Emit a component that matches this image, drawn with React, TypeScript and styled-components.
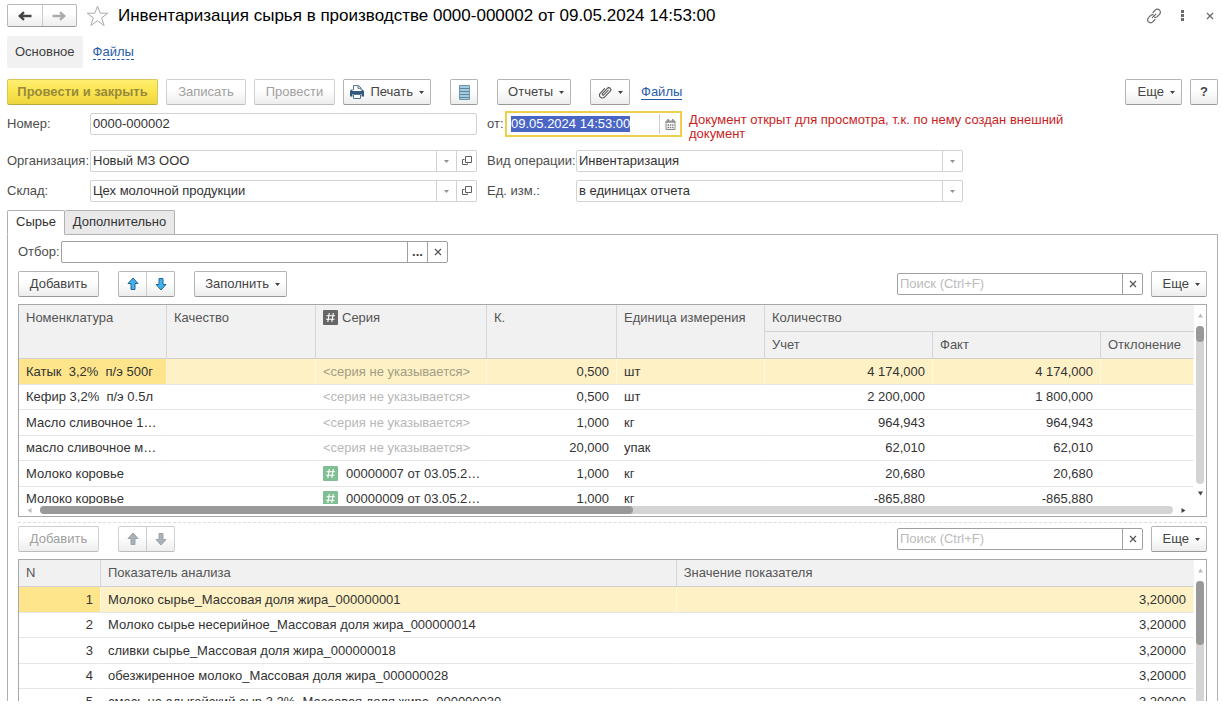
import React, { useEffect, useRef } from "react";
import styled, { createGlobalStyle, css } from "styled-components";

const GlobalStyle = createGlobalStyle`
  *, *::before, *::after { box-sizing: border-box; }
  body {
    margin: 0;
    background: #fff;
    color: #404040;
    font: 13px/16px "Liberation Sans", Arial, sans-serif;
  }
  button, input, select { font: inherit; color: inherit; margin: 0; }
  h1 { margin: 0; font-weight: 400; }
  svg { flex: none; }
`;

const Page = styled.main`
  display: flex;
  flex-direction: column;
  height: 100vh;
  padding: 4px 4px 9px 7px;
  overflow: hidden;
`;

/* ---------- window header ---------- */

const TitleBar = styled.header`
  display: flex;
  align-items: center;
  height: 23px;
`;

const Title = styled.h1`
  flex: 1;
  color: #000;
  font-size: 17px;
  line-height: 20px;
  margin-left: 9px;
`;

const IconButton = styled.button<{ $w: number }>`
  display: flex;
  align-items: center;
  justify-content: center;
  width: ${(p) => p.$w}px;
  height: 22px;
  padding: 0;
  border: 0;
  background: none;
  color: #666;
`;

const Sections = styled.nav`
  display: flex;
  align-items: center;
  gap: 7px;
  height: 32px;
  margin-top: 9px;
`;

const Section = styled.a`
  padding: 8px;
  border-radius: 2px;
  background: #f1f1f1;
  color: #404040;
  text-decoration: none;
`;

const Link = styled.a<{ $dashed?: boolean }>`
  margin-left: 3px;
  color: #2a5caa;
  text-decoration: none;
  line-height: 14px;
  border-bottom: 1px ${(p) => (p.$dashed ? "dashed" : "solid")} #2a5caa;
`;

/* ---------- buttons ---------- */

const Bar = styled.div<{ $top?: number }>`
  display: flex;
  align-items: center;
  gap: 8px;
  height: 26px;
  flex: none;
  margin-top: ${(p) => p.$top ?? 0}px;
`;

const Spacer = styled.span<{ $w?: number }>`
  flex: ${(p) => (p.$w ? `0 0 ${p.$w}px` : "1")};
`;

const Button = styled.button<{ $w: number; $primary?: boolean; $end?: boolean; $bold?: boolean }>`
  display: flex;
  align-items: center;
  justify-content: ${(p) => (p.$end ? "flex-end" : "center")};
  gap: 6px;
  flex: none;
  width: ${(p) => p.$w}px;
  height: 26px;
  padding: 0 ${(p) => (p.$end ? 6 : 0)}px;
  border: 1px solid #b4b4b4;
  border-bottom-color: #999;
  border-radius: 2px;
  background: linear-gradient(#fff, #fff 40%, #ededed);
  color: #444;
  font-weight: ${(p) => (p.$bold ? 700 : 400)};
  white-space: nowrap;
  &:disabled {
    color: #a0a0a0;
    border-color: #d0d0d0;
    border-bottom-color: #bcbcbc;
  }
  ${(p) =>
    p.$primary &&
    css`
      &, &:disabled {
        background: linear-gradient(#ffee70, #fae44f 50%, #eed53f);
        border-color: #d9c65a;
        border-bottom-color: #bba93c;
        color: #978a3c;
        font-weight: 700;
      }
    `}
`;

const Pair = styled.div<{ $w: number; $h: number; $off?: boolean }>`
  display: flex;
  flex: none;
  width: ${(p) => p.$w}px;
  height: ${(p) => p.$h}px;
  border: 1px solid ${(p) => (p.$off ? "#d0d0d0" : "#b8b8b8")};
  border-bottom-color: ${(p) => (p.$off ? "#bcbcbc" : "#999")};
  border-radius: 2px;
  background: linear-gradient(#fff, #fff 40%, #ededed);
  button {
    display: flex;
    flex: 1;
    align-items: center;
    justify-content: center;
    padding: 0;
    border: 0;
    background: none;
  }
  button + button { border-left: 1px solid #ccc; }
`;

/* ---------- form ---------- */

const Form = styled.div`
  display: grid;
  grid-template-columns: 83px minmax(0, 387px) 99px minmax(0, 387px);
  row-gap: 8px;
  align-items: center;
  margin-top: 6px;
`;

const HeadRow = styled.div`
  display: flex;
  align-items: center;
  height: 26px;
  margin-top: 6px;
  margin-bottom: 7px;
`;

const Label = styled.label<{ $w?: number; $indent?: number }>`
  flex: none;
  width: ${(p) => (p.$w ? `${p.$w}px` : "auto")};
  padding-left: ${(p) => p.$indent ?? 0}px;
  color: #4d4d4d;
  white-space: nowrap;
`;

const Field = styled.div<{ $dark?: boolean; $w?: number }>`
  display: flex;
  flex: ${(p) => (p.$w ? `0 1 ${p.$w}px` : "1")};
  height: 22px;
  min-width: 0;
  border: 1px solid ${(p) => (p.$dark ? "#a0a0a0" : "#d2d2d2")};
  border-radius: 2px;
  background: #fff;
  input, select {
    flex: 1;
    width: 0;
    min-width: 0;
    padding: 0 2px;
    border: 0;
    outline: 0;
    background: none;
    color: #333;
    appearance: none;
  }
  input::placeholder { color: #bbb; opacity: 1; }
  input::selection { background: #4a66c4; color: #fff; }
  button, > span {
    display: flex;
    flex: none;
    align-items: center;
    justify-content: center;
    width: 20px;
    padding: 0;
    border: 0;
    border-left: 1px solid ${(p) => (p.$dark ? "#a0a0a0" : "#d2d2d2")};
    background: none;
  }
`;

const DateField = styled(Field)`
  height: 26px;
  border: 2px solid #ecd04c;
  border-radius: 0;
  input { padding: 0 4px; }
  button { width: 21px; margin: 1px 0; }
`;

const Warning = styled.p`
  flex: 1;
  max-width: 400px;
  margin: 6px 0 0 7px;
  color: #c81e1e;
  line-height: 14px;
`;

/* ---------- tabs and panel ---------- */

const Tabs = styled.div`
  display: flex;
  flex: none;
  height: 25px;
  margin-top: 8px;
`;

const Tab = styled.button<{ $active?: boolean; $w: number }>`
  width: ${(p) => p.$w}px;
  height: 25px;
  padding: 0 0 2px;
  border: 1px solid #b0b0b0;
  border-radius: 2px 2px 0 0;
  border-bottom-color: ${(p) => (p.$active ? "#fff" : "#b0b0b0")};
  border-left-width: ${(p) => (p.$active ? 1 : 0)}px;
  background: ${(p) => (p.$active ? "#fff" : "#e9e9e9")};
  color: #333;
  z-index: 1;
`;

const Panel = styled.section`
  display: flex;
  flex: 1;
  flex-direction: column;
  min-height: 0;
  margin-top: -1px;
  padding: 4px 10px 0;
  border: 1px solid #b0b0b0;
  border-bottom: 0;
  overflow: hidden;
`;

const FilterBar = styled(Bar)`
  gap: 0;
`;

const Splitter = styled.hr`
  flex: none;
  width: 100%;
  margin: 5px 0 3px;
  border: 0;
  border-top: 1px dashed #ddd;
`;

/* ---------- data grids ---------- */

const GridBox = styled.div<{ $h?: number }>`
  display: flex;
  flex: ${(p) => (p.$h ? `0 0 ${p.$h}px` : "1")};
  min-height: 0;
  margin-top: 7px;
  border: 1px solid #a8a8a8;
  border-bottom-width: ${(p) => (p.$h ? 1 : 0)}px;
  overflow: hidden;
`;

const GridMain = styled.div`
  display: flex;
  flex: 1;
  flex-direction: column;
  min-width: 0;
  min-height: 0;
`;

const GridClip = styled.div`
  flex: 1;
  min-height: 0;
  overflow: hidden;
`;

const Table = styled.table`
  width: 100%;
  table-layout: fixed;
  border-collapse: separate;
  border-spacing: 0;
  th, td {
    padding: 0 2px 0 7px;
    overflow: hidden;
    text-align: left;
    text-overflow: ellipsis;
    white-space: pre;
    font-weight: 400;
  }
  th {
    height: 27px;
    background: #f1f1f1;
    border-right: 1px solid #d6d6d6;
    border-bottom: 1px solid #d0d0d0;
    color: #555;
  }
  th[rowspan] { padding-top: 5px; vertical-align: top; }
  th:last-child { border-right-color: #f1f1f1; }
  td {
    height: 26px;
    border-right: 1px solid transparent;
    border-bottom: 1px solid #e6e6e6;
    color: #333;
  }
  tr:nth-child(even) > td { height: 25px; }
`;

const Row = styled.tr<{ $selected?: boolean }>`
  ${(p) =>
    p.$selected &&
    css`
      td { background: #fdf1c5; border-right-color: #fff8e0; }
      td:first-child { background: #fee58c; }
    `}
`;

const Cell = styled.td<{ $right?: boolean }>`
  ${(p) =>
    p.$right &&
    css`
      && { padding-right: 7px; text-align: right; }
    `}
`;

const Muted = styled.span<{ $strong?: boolean }>`
  color: ${(p) => (p.$strong ? "#a39d85" : "#b8b8b8")};
`;

const Hash = styled.svg<{ $gap: number }>`
  width: 15px;
  height: 15px;
  margin-right: ${(p) => p.$gap}px;
  vertical-align: -3px;
`;

const VScroll = styled.div`
  display: flex;
  flex: 0 0 12px;
  flex-direction: column;
  align-items: center;
  padding-top: 8px;
`;

const VTrack = styled.div<{ $fill?: boolean }>`
  width: 8px;
  flex: ${(p) => (p.$fill ? "1" : "0 0 158px")};
  margin: 8px 0 7px;
  border-radius: 4px;
  background: #d4d4d4;
  ${(p) => p.$fill && "margin-bottom: 0; border-radius: 4px 4px 0 0;"}
`;

const Thumb = styled.div<{ $h: number }>`
  width: 8px;
  height: ${(p) => p.$h}px;
  border-radius: 4px;
  background: #999;
`;

const HScroll = styled.div`
  display: flex;
  flex: 0 0 12px;
  align-items: center;
  padding: 0 8px;
  background: #fff;
`;

const HTrack = styled.div`
  flex: 1;
  height: 8px;
  margin: 0 8px;
  border-radius: 4px;
  background: #d4d4d4;
`;

const HThumb = styled.div`
  width: calc(100% * 11 / 21);
  height: 8px;
  border-radius: 4px;
  background: #999;
`;

/* ---------- icons ---------- */

const Caret = ({ pale }: { pale?: boolean }) => (
  <svg width="5" height="3" viewBox="0 0 5 3" fill={pale ? "#909090" : "#444"}>
    <path d="M0 0h5L2.5 3z" />
  </svg>
);

const NavArrow = ({ flip, color }: { flip?: boolean; color: string }) => (
  <svg width="14" height="10" viewBox="0 0 14 10" fill="none" stroke={color} strokeWidth="2.4">
    {flip ? <path d="M0.5 5h11M8 1.2l4.3 3.8L8 8.8" /> : <path d="M13.5 5h-11M6 1.2L1.7 5 6 8.8" />}
  </svg>
);

const Star = () => (
  <svg width="23" height="22" viewBox="0 0 23 22" fill="#fff" stroke="#aaa" strokeWidth="1">
    <path d="M11.5 1.2l2.7 7h7.6l-6.1 4.7 2.4 7.6-6.6-4.7-6.6 4.7 2.4-7.6L1.2 8.2h7.6z" />
  </svg>
);

const LinkIcon = () => (
  <svg width="16" height="16" viewBox="0 0 16 16" fill="none" stroke="#6a6a6a" strokeWidth="1.2" strokeLinecap="round">
    <path d="M7 4.5l2.2-2.4a2.9 2.9 0 0 1 4.3 0 2.9 2.9 0 0 1 0 4.2L11.3 8.6a2.9 2.9 0 0 1-2.6.6" />
    <path d="M9 11.5l-2.2 2.4a2.9 2.9 0 0 1-4.3 0 2.9 2.9 0 0 1 0-4.2L4.7 7.4a2.9 2.9 0 0 1 2.6-.6" />
    <path d="M6.3 9.7l3.4-3.4" />
  </svg>
);

const Dots = () => (
  <svg width="3" height="11" viewBox="0 0 3 11" fill="#6a6a6a">
    <path d="M0 0h3v3H0zM0 4h3v3H0zM0 8h3v3H0z" />
  </svg>
);

const Cross = ({ color = "#555" }: { color?: string }) => (
  <svg width="8" height="8" viewBox="0 0 8 8" stroke={color} strokeWidth="1.2">
    <path d="M1 1l6 6M7 1L1 7" />
  </svg>
);

const Printer = () => (
  <svg width="14" height="14" viewBox="0 0 14 14">
    <path d="M3.5 5V.6h5L11 3v2" fill="#fff" stroke="#54738f" />
    <path d="M8 .6V3.3h3" fill="none" stroke="#54738f" />
    <path d="M1.5 4.5h1V6h9V4.5h1L14 6v5.5h-2.5V9h-9v2.5H0V6z" fill="#34597e" />
    <path d="M3.5 9.5h7v4h-7z" fill="#fff" stroke="#54738f" />
  </svg>
);

const ListIcon = () => (
  <svg width="11" height="15" viewBox="0 0 11 15">
    <path d="M.5.5h10v14H.5z" fill="#a5cbdf" stroke="#6b95ab" />
    <path d="M1 3.5h9M1 6.5h9M1 9.5h9M1 12.5h9" stroke="#5b879f" />
  </svg>
);

const Clip = () => (
  <svg width="13" height="13" viewBox="0 0 13 13" fill="none" stroke="#555" strokeWidth="1.1" strokeLinecap="round">
    <path d="M9.3 4.2L5 8.7a1 1 0 0 1-1.5-1.4l4.8-5a2 2 0 0 1 3 0 2 2 0 0 1 0 2.8l-5.8 6a2.8 2.8 0 0 1-4.2 0 2.8 2.8 0 0 1 0-4l4.2-4.4" />
  </svg>
);

const Calendar = () => (
  <svg width="11" height="11" viewBox="0 0 11 11">
    <path d="M1 2h9v8.500H1z" fill="#fff" stroke="#8a8a8a" />
    <path d="M1 3h9M3.2 0v3M7.8 0v3" stroke="#8a8a8a" strokeWidth="1.5" />
    <path d="M2.5 6h6M2.5 8.500h6" stroke="#777" strokeWidth="1.3" strokeDasharray="1.5 .8" />
  </svg>
);

const OpenIcon = () => (
  <svg width="10" height="10" viewBox="0 0 10 10" fill="none" stroke="#606060">
    <path d="M3.5.5h6v6h-6zM2.5 3.5h-2v5h5v-1" />
  </svg>
);

const MoveArrow = ({ down, off }: { down?: boolean; off?: boolean }) => (
  <svg width="12" height="14" viewBox="0 0 12 14" fill={off ? "#a9b2b8" : "#45b0ea"} stroke={off ? "#9aa4aa" : "#21689c"} strokeLinejoin="round">
    {down ? <path d="M4 1.5h4v6h3L6 13 1 7.500h3z" /> : <path d="M4 12.5h4v-6h3L6 1 1 6.500h3z" />}
  </svg>
);

const HashIcon = ({ color, gap }: { color: string; gap: number }) => (
  <Hash $gap={gap} viewBox="0 0 15 15">
    <rect width="15" height="15" rx="1" fill={color} />
    <path d="M6.3 3L4.8 12M10.3 3L8.8 12M3.5 5.7h8.500M3 9.3h8.500" stroke="#fff" strokeWidth="1.1" />
  </Hash>
);

const triangles = {
  up: "M0 4.5L2.5.5 5 4.5z",
  down: "M0 .5h5L2.5 4.5z",
  left: "M4.5 0v5L.5 2.5z",
  right: "M.5 0v5L4.5 2.5z",
};

const Triangle = ({ dir, pale }: { dir: keyof typeof triangles; pale?: boolean }) => (
  <svg width="5" height="5" viewBox="0 0 5 5" fill={pale ? "#bbb" : "#444"}>
    <path d={triangles[dir]} />
  </svg>
);

/* ---------- data ---------- */

type Material = { name: string; series?: string; k: string; unit: string; book: string; fact: string };

const materials: Material[] = [
  { name: "Катык  3,2%  п/э 500г", k: "0,500", unit: "шт", book: "4 174,000", fact: "4 174,000" },
  { name: "Кефир 3,2%  п/э 0.5л", k: "0,500", unit: "шт", book: "2 200,000", fact: "1 800,000" },
  { name: "Масло сливочное 1…", k: "1,000", unit: "кг", book: "964,943", fact: "964,943" },
  { name: "масло сливочное м…", k: "20,000", unit: "упак", book: "62,010", fact: "62,010" },
  { name: "Молоко коровье", series: "00000007 от 03.05.2…", k: "1,000", unit: "кг", book: "20,680", fact: "20,680" },
  { name: "Молоко коровье", series: "00000009 от 03.05.2…", k: "1,000", unit: "кг", book: "-865,880", fact: "-865,880" },
];

const indicators = [
  "Молоко сырье_Массовая доля жира_000000001",
  "Молоко сырье несерийное_Массовая доля жира_000000014",
  "сливки сырье_Массовая доля жира_000000018",
  "обезжиренное молоко_Массовая доля жира_000000028",
  "смесь на адыгейский сыр 3,2%_Массовая доля жира_000000030",
];

/* ---------- composed parts ---------- */

const ListToolbar = ({ off, top, children }: { off?: boolean; top: number; children?: React.ReactNode }) => (
  <Bar $top={top}>
    <Button $w={81} disabled={off}>Добавить</Button>
    <Spacer $w={3} />
    <Pair $w={57} $h={26} $off={off}>
      <button aria-label="Вверх" disabled={off}><MoveArrow off={off} /></button>
      <button aria-label="Вниз" disabled={off}><MoveArrow down off={off} /></button>
    </Pair>
    <Spacer $w={3} />
    {children}
    <Spacer />
    <Field $dark $w={246}>
      <input aria-label="Поиск" placeholder="Поиск (Ctrl+F)" />
      <button aria-label="Очистить поиск"><Cross /></button>
    </Field>
    <Button $w={56} $end>Еще <Caret /></Button>
  </Bar>
);

export default function App() {
  const dateRef = useRef<HTMLInputElement>(null);
  useEffect(() => {
    dateRef.current?.focus();
    dateRef.current?.select();
  }, []);

  return (
    <Page>
      <GlobalStyle />
      <TitleBar>
        <Pair $w={70} $h={23}>
          <button aria-label="Назад"><NavArrow color="#444" /></button>
          <button aria-label="Вперед"><NavArrow flip color="#aaa" /></button>
        </Pair>
        <Spacer $w={9} />
        <IconButton $w={23} aria-label="В избранное"><Star /></IconButton>
        <Title>Инвентаризация сырья в производстве 0000-000002 от 09.05.2024 14:53:00</Title>
        <IconButton $w={16} aria-label="Получить ссылку"><LinkIcon /></IconButton>
        <IconButton $w={40} aria-label="Меню"><Dots /></IconButton>
        <IconButton $w={16} aria-label="Закрыть"><Cross color="#666" /></IconButton>
      </TitleBar>

      <Sections>
        <Section href="#main">Основное</Section>
        <Link $dashed href="#files">Файлы</Link>
      </Sections>

      <Bar $top={11}>
        <Button $w={151} $primary disabled>Провести и закрыть</Button>
        <Button $w={80} disabled>Записать</Button>
        <Button $w={81} disabled>Провести</Button>
        <Button $w={88} $end><Printer />Печать <Caret /></Button>
        <Spacer $w={3} />
        <Button $w={28} aria-label="Реестр"><ListIcon /></Button>
        <Spacer $w={3} />
        <Button $w={74} $end>Отчеты <Caret /></Button>
        <Spacer $w={3} />
        <Button $w={40} $end aria-label="Вложения"><Clip /> <Caret /></Button>
        <Link href="#attached">Файлы</Link>
        <Spacer />
        <Button $w={57} $end>Еще <Caret /></Button>
        <Button $w={28} $bold>?</Button>
      </Bar>

      <HeadRow>
        <Label $w={83} htmlFor="num">Номер:</Label>
        <Field $w={387}><input id="num" defaultValue="0000-000002" /></Field>
        <Label $w={28} $indent={10} htmlFor="date">от:</Label>
        <DateField $w={177}>
          <input id="date" ref={dateRef} defaultValue="09.05.2024 14:53:00" />
          <button aria-label="Календарь"><Calendar /></button>
        </DateField>
        <Warning>Документ открыт для просмотра, т.к. по нему создан внешний документ</Warning>
      </HeadRow>

      <Form>
        <Label htmlFor="org">Организация:</Label>
        <Field>
          <input id="org" defaultValue="Новый МЗ ООО" />
          <button aria-label="Выбрать организацию"><Caret pale /></button>
          <button aria-label="Открыть организацию"><OpenIcon /></button>
        </Field>
        <Label $indent={10} htmlFor="op">Вид операции:</Label>
        <Field>
          <select id="op"><option>Инвентаризация</option></select>
          <span><Caret pale /></span>
        </Field>

        <Label htmlFor="store">Склад:</Label>
        <Field>
          <input id="store" defaultValue="Цех молочной продукции" />
          <button aria-label="Выбрать склад"><Caret pale /></button>
          <button aria-label="Открыть склад"><OpenIcon /></button>
        </Field>
        <Label $indent={10} htmlFor="units">Ед. изм.:</Label>
        <Field>
          <select id="units"><option>в единицах отчета</option></select>
          <span><Caret pale /></span>
        </Field>
      </Form>

      <Tabs role="tablist">
        <Tab role="tab" aria-selected $active $w={58}>Сырье</Tab>
        <Tab role="tab" aria-selected={false} $w={110}>Дополнительно</Tab>
      </Tabs>

      <Panel>
        <FilterBar>
          <Label $w={43} htmlFor="filter">Отбор:</Label>
          <Field $dark $w={387}>
            <input id="filter" />
            <button aria-label="Выбрать отбор"><b>...</b></button>
            <button aria-label="Очистить отбор"><Cross /></button>
          </Field>
        </FilterBar>

        <ListToolbar top={6}>
          <Button $w={93} $end>Заполнить <Caret /></Button>
        </ListToolbar>

        <GridBox $h={213}>
          <GridMain>
            <GridClip>
              <Table>
                <colgroup>
                  <col width="148" /><col width="149" /><col width="171" /><col width="130" />
                  <col width="148" /><col width="168" /><col width="168" /><col />
                </colgroup>
                <thead>
                  <tr>
                    <th rowSpan={2}>Номенклатура</th>
                    <th rowSpan={2}>Качество</th>
                    <th rowSpan={2}><HashIcon color="#666" gap={4} />Серия</th>
                    <th rowSpan={2}>К.</th>
                    <th rowSpan={2}>Единица измерения</th>
                    <th colSpan={3}>Количество</th>
                  </tr>
                  <tr><th>Учет</th><th>Факт</th><th>Отклонение</th></tr>
                </thead>
                <tbody>
                  {materials.map((m, i) => (
                    <Row key={i} $selected={i === 0}>
                      <Cell>{m.name}</Cell>
                      <Cell />
                      <Cell>
                        {m.series ? (
                          <><HashIcon color="#7fbf93" gap={8} />{m.series}</>
                        ) : (
                          <Muted $strong={i === 0}>&lt;серия не указывается&gt;</Muted>
                        )}
                      </Cell>
                      <Cell $right>{m.k}</Cell>
                      <Cell>{m.unit}</Cell>
                      <Cell $right>{m.book}</Cell>
                      <Cell $right>{m.fact}</Cell>
                      <Cell />
                    </Row>
                  ))}
                </tbody>
              </Table>
            </GridClip>
            <HScroll>
              <Triangle dir="left" pale />
              <HTrack><HThumb /></HTrack>
              <Triangle dir="right" />
            </HScroll>
          </GridMain>
          <VScroll>
            <Triangle dir="up" pale />
            <VTrack><Thumb $h={16} /></VTrack>
            <Triangle dir="down" />
          </VScroll>
        </GridBox>

        <Splitter />
        <ListToolbar off top={0} />

        <GridBox>
          <GridMain>
            <GridClip>
              <Table>
                <colgroup><col width="82" /><col width="49%" /><col /></colgroup>
                <thead>
                  <tr><th>N</th><th>Показатель анализа</th><th>Значение показателя</th></tr>
                </thead>
                <tbody>
                  {indicators.map((name, i) => (
                    <Row key={name} $selected={i === 0}>
                      <Cell $right>{i + 1}</Cell>
                      <Cell>{name}</Cell>
                      <Cell $right>3,20000</Cell>
                    </Row>
                  ))}
                </tbody>
              </Table>
            </GridClip>
          </GridMain>
          <VScroll>
            <Triangle dir="up" pale />
            <VTrack $fill><Thumb $h={64} /></VTrack>
          </VScroll>
        </GridBox>
      </Panel>
    </Page>
  );
}
